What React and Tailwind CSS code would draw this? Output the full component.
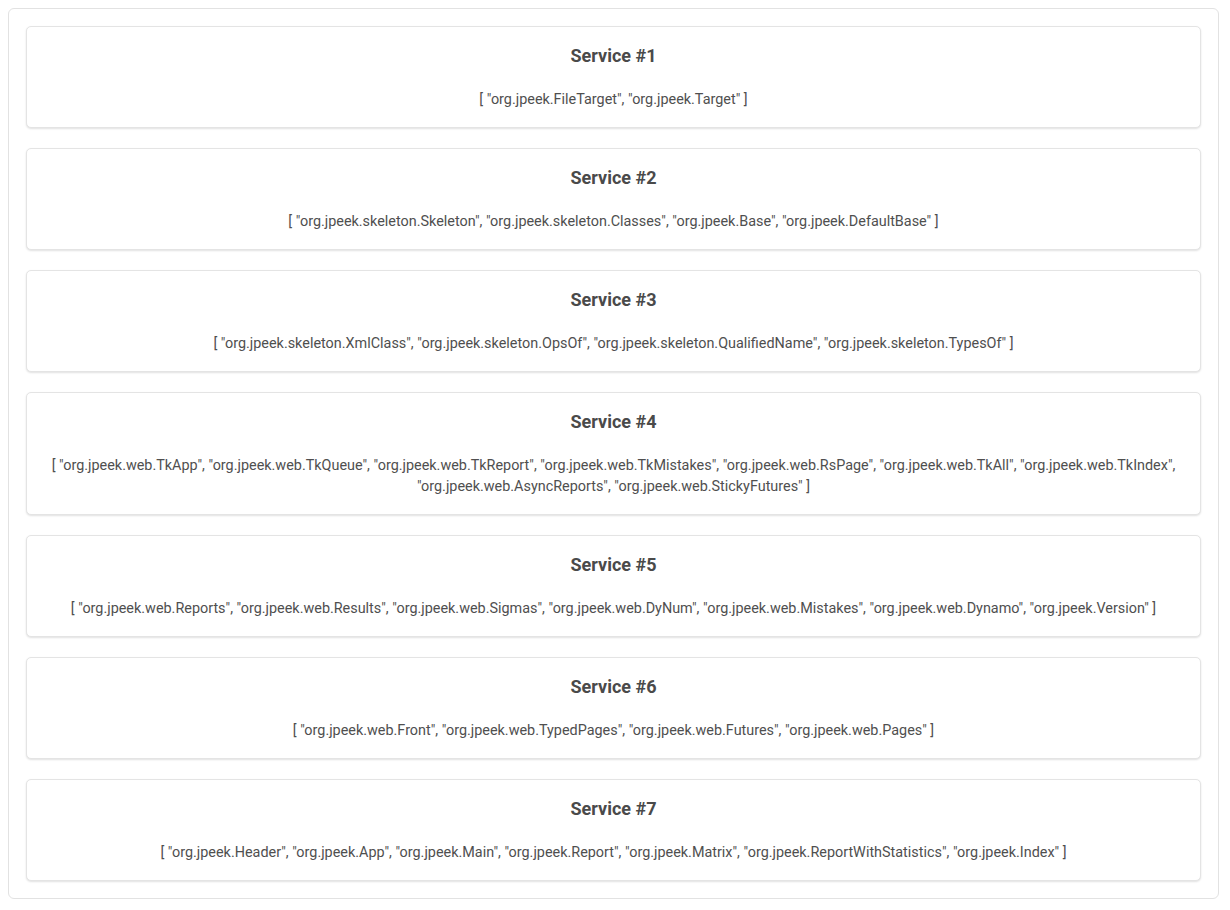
const services = [
    ['org.jpeek.FileTarget', 'org.jpeek.Target'],
    ['org.jpeek.skeleton.Skeleton', 'org.jpeek.skeleton.Classes', 'org.jpeek.Base', 'org.jpeek.DefaultBase'],
    ['org.jpeek.skeleton.XmlClass', 'org.jpeek.skeleton.OpsOf', 'org.jpeek.skeleton.QualifiedName', 'org.jpeek.skeleton.TypesOf'],
    ['org.jpeek.web.TkApp', 'org.jpeek.web.TkQueue', 'org.jpeek.web.TkReport', 'org.jpeek.web.TkMistakes', 'org.jpeek.web.RsPage', 'org.jpeek.web.TkAll', 'org.jpeek.web.TkIndex', 'org.jpeek.web.AsyncReports', 'org.jpeek.web.StickyFutures'],
    ['org.jpeek.web.Reports', 'org.jpeek.web.Results', 'org.jpeek.web.Sigmas', 'org.jpeek.web.DyNum', 'org.jpeek.web.Mistakes', 'org.jpeek.web.Dynamo', 'org.jpeek.Version'],
    ['org.jpeek.web.Front', 'org.jpeek.web.TypedPages', 'org.jpeek.web.Futures', 'org.jpeek.web.Pages'],
    ['org.jpeek.Header', 'org.jpeek.App', 'org.jpeek.Main', 'org.jpeek.Report', 'org.jpeek.Matrix', 'org.jpeek.ReportWithStatistics', 'org.jpeek.Index'],
];

function ServiceCard({ index, classes }) {
    return (
        <div className="bg-white border border-[#e4e4e4] rounded-[5px] shadow-[0_1px_2px_rgba(0,0,0,0.12)] px-6 pt-[15px] pb-[17px] text-center">
            <h2 className="text-[18px] leading-[28px] font-bold text-[#4a4a4a]">Service #{index}</h2>
            <p className="mt-[19px] text-[14.4px] leading-[21px] text-[#4f4f4f]">
                {'[ ' + classes.map(c => '"' + c + '"').join(', ') + ' ]'}
            </p>
        </div>
    );
}

export default function App() {
    return (
        <div className="bg-white min-h-[910px] pt-2 pl-2 font-['Roboto',sans-serif]">
            <div className="w-[1211px] border border-[#e2e2e2] rounded-[6px] p-[17px] flex flex-col gap-[20px]">
                {services.map((s, i) => (
                    <ServiceCard key={i} index={i + 1} classes={s} />
                ))}
            </div>
        </div>
    );
}
